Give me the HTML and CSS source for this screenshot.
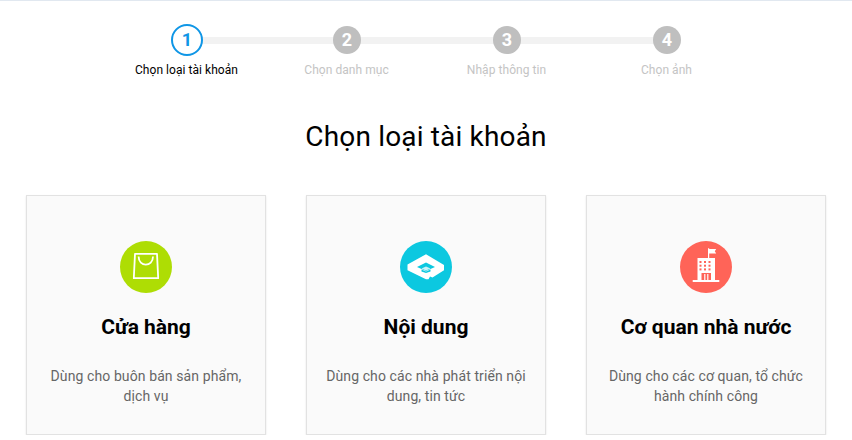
FILE: index.html
```html
<!DOCTYPE html>
<html lang="vi">
<head>
  <meta charset="UTF-8" />
  <title>Chọn loại tài khoản</title>
  <link rel="stylesheet" href="styles.css">
</head>
<body>

<div class="steps">
  <div class="step active">
    <div class="dot-wrap"><span class="dot">1</span></div>
    <span class="step-label">Chọn loại tài khoản</span>
  </div>
  <div class="step">
    <div class="dot-wrap"><span class="dot">2</span></div>
    <span class="step-label">Chọn danh mục</span>
  </div>
  <div class="step">
    <div class="dot-wrap"><span class="dot">3</span></div>
    <span class="step-label">Nhập thông tin</span>
  </div>
  <div class="step">
    <div class="dot-wrap"><span class="dot">4</span></div>
    <span class="step-label">Chọn ảnh</span>
  </div>
</div>

<h1 class="title">Chọn loại tài khoản</h1>

<div class="cards">

  <div class="card">
    <div class="icon icon-shop">
      <svg width="52" height="52" viewBox="0 0 52 52">
        <path d="M15 12.8H37L38.2 37.2H13.8Z" fill="none" stroke="#fff" stroke-width="1.8" stroke-linejoin="round"/>
        <path d="M18.6 15.5C18.6 26.3 33 26.3 33 15.5" fill="none" stroke="#fff" stroke-width="1.8"/>
      </svg>
    </div>
    <h2>Cửa hàng</h2>
    <p>Dùng cho buôn bán sản phẩm, dịch vụ</p>
  </div>

  <div class="card">
    <div class="icon icon-content">
      <svg width="52" height="52" viewBox="0 0 52 52">
        <path d="M26 13.3L44 24V29.2L32.5 36.5L30 35.5L28.5 38.3H26L7.5 29.2V23.5Z" fill="#fff"/>
        <path d="M26 21.5L35 26L26 30L17 26Z" fill="#0cc8e0"/>
        <path d="M21.5 27.5L26 25.5L30.5 27.5L26 29.5Z" fill="#c9f2f8"/>
        <path d="M21.5 28.5L26 30.5L30.5 28.5V30.5L26 32L21.5 30.5Z" fill="#0cc8e0"/>
      </svg>
    </div>
    <h2>Nội dung</h2>
    <p>Dùng cho các nhà phát triển nội dung, tin tức</p>
  </div>

  <div class="card">
    <div class="icon icon-gov">
      <svg width="52" height="52" viewBox="0 0 52 52">
        <path d="M28.6 17V7.3" stroke="#fff" stroke-width="1.2"/>
        <path d="M29 8H36.2L34.8 10.2L36.2 12.4H29Z" fill="#fff"/>
        <path d="M17.5 17H35V39.5H17.5Z" fill="#fff"/>
        <path d="M12.7 39H39.3V41H12.7Z" fill="#fff"/>
        <g fill="#ff6458">
          <rect x="19.5" y="20" width="2" height="2"/>
          <rect x="24" y="20" width="2" height="2"/>
          <rect x="28.5" y="20" width="2" height="2"/>
          <rect x="19.5" y="23.7" width="2" height="2"/>
          <rect x="24" y="23.7" width="2" height="2"/>
          <rect x="28.5" y="23.7" width="2" height="2"/>
          <rect x="19.5" y="27.4" width="2" height="2"/>
          <rect x="24" y="27.4" width="2" height="2"/>
          <rect x="28.5" y="27.4" width="2" height="2"/>
          <rect x="21.5" y="32" width="9.5" height="7"/>
        </g>
        <path d="M24.2 33H25.4V39H24.2ZM27.2 33H28.4V39H27.2Z" fill="#fff"/>
      </svg>
    </div>
    <h2>Cơ quan nhà nước</h2>
    <p>Dùng cho các cơ quan, tổ chức hành chính công</p>
  </div>

</div>

</body>
</html>
```

FILE: styles.css
```css
body {
  margin: 0;
  font-family: Roboto, "Liberation Sans", sans-serif;
  background: #fff;
  color: #000;
  border-top: 1px solid #e1e8f0;
  overflow: hidden;
}

.steps {
  position: relative;
  display: flex;
  justify-content: center;
  width: 640px;
  margin: 23px 105px 0 107px;
}

/* grey line behind the numbers */
.steps::before {
  content: "";
  position: absolute;
  top: 13px;
  left: 80px;
  right: 80px;
  height: 7px;
  background: #f2f2f2;
}

.step {
  position: relative;
  flex: 1;
  display: flex;
  flex-direction: column;
  align-items: center;
}

.dot-wrap {
  height: 32px;
  display: flex;
  align-items: center;
}

.dot {
  width: 28px;
  height: 28px;
  border-radius: 50%;
  background: #bfbfbf;
  color: #fff;
  font-size: 18px;
  font-weight: 700;
  line-height: 28px;
  text-align: center;
}

.step.active .dot {
  width: 28px;
  height: 28px;
  border: 2px solid #0f96e6;
  background: #fff;
  color: #0f96e6;
}

.step-label {
  margin: 6px 1px 0 0;
  font-size: 12px;
  line-height: 16px;
  letter-spacing: 0.05px;
  color: #c4c4c4;
}

.step.active .step-label {
  color: #000;
}

.title {
  margin: 39px 0 0;
  font-size: 28px;
  font-weight: 400;
  line-height: 40px;
  letter-spacing: 0.17px;
  text-align: center;
}

.cards {
  display: flex;
  justify-content: center;
  gap: 40px;
  margin-top: 38px;
}

.card {
  box-sizing: border-box;
  width: 240px;
  height: 240px;
  padding: 45px 15px 0;
  background: #fafafa;
  border: 1px solid #e2e2e2;
  box-shadow: 0 1px 2px rgba(0, 0, 0, 0.1);
  text-align: center;
}

.icon {
  width: 52px;
  height: 52px;
  margin: 0 auto;
  border-radius: 50%;
}

.icon svg {
  display: block;
}

.icon-shop {
  background: #aedd04;
}

.icon-content {
  background: #0cc8e0;
}

.icon-gov {
  background: #ff6458;
}

.card h2 {
  margin: 20px 0 0;
  font-size: 21px;
  font-weight: 700;
  line-height: 28px;
}

.card p {
  margin: 26px 0 0;
  font-size: 14px;
  line-height: 19.6px;
  letter-spacing: 0.1px;
  color: #666;
}
```
